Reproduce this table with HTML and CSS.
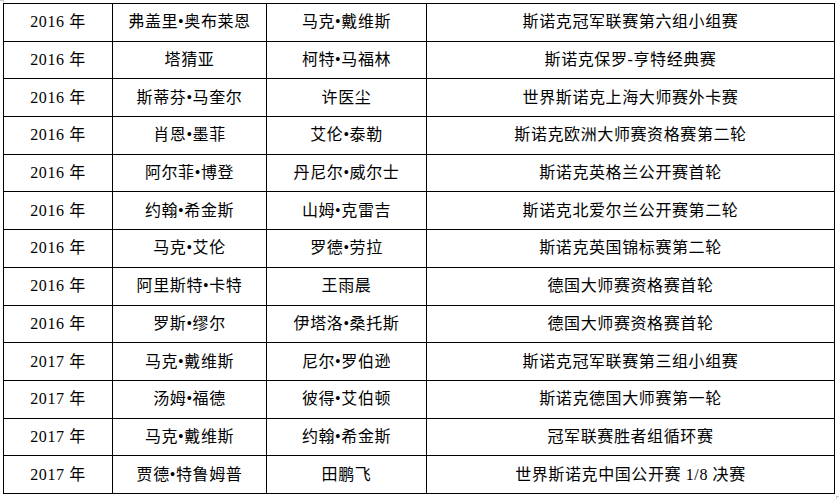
FILE: index.html
```html
<!DOCTYPE html>
<html lang="zh-CN">
<head>
<meta charset="utf-8">
<title>比赛记录</title>
<link rel="stylesheet" href="styles.css">
</head>
<body>
<span class="mark mark-tl"></span>
<table class="records">
  <colgroup>
    <col class="c-year">
    <col class="c-p1">
    <col class="c-p2">
    <col class="c-event">
  </colgroup>
  <tbody>
    <tr><td>2016 年</td><td>弗盖里•奥布莱恩</td><td>马克•戴维斯</td><td>斯诺克冠军联赛第六组小组赛</td></tr>
    <tr><td>2016 年</td><td>塔猜亚</td><td>柯特•马福林</td><td>斯诺克保罗-亨特经典赛</td></tr>
    <tr><td>2016 年</td><td>斯蒂芬•马奎尔</td><td>许医尘</td><td>世界斯诺克上海大师赛外卡赛</td></tr>
    <tr><td>2016 年</td><td>肖恩•墨菲</td><td>艾伦•泰勒</td><td>斯诺克欧洲大师赛资格赛第二轮</td></tr>
    <tr><td>2016 年</td><td>阿尔菲•博登</td><td>丹尼尔•威尔士</td><td>斯诺克英格兰公开赛首轮</td></tr>
    <tr><td>2016 年</td><td>约翰•希金斯</td><td>山姆•克雷吉</td><td>斯诺克北爱尔兰公开赛第二轮</td></tr>
    <tr><td>2016 年</td><td>马克•艾伦</td><td>罗德•劳拉</td><td>斯诺克英国锦标赛第二轮</td></tr>
    <tr><td>2016 年</td><td>阿里斯特•卡特</td><td>王雨晨</td><td>德国大师赛资格赛首轮</td></tr>
    <tr><td>2016 年</td><td>罗斯•缪尔</td><td>伊塔洛•桑托斯</td><td>德国大师赛资格赛首轮</td></tr>
    <tr><td>2017 年</td><td>马克•戴维斯</td><td>尼尔•罗伯逊</td><td>斯诺克冠军联赛第三组小组赛</td></tr>
    <tr><td>2017 年</td><td>汤姆•福德</td><td>彼得•艾伯顿</td><td>斯诺克德国大师赛第一轮</td></tr>
    <tr><td>2017 年</td><td>马克•戴维斯</td><td>约翰•希金斯</td><td>冠军联赛胜者组循环赛</td></tr>
    <tr><td>2017 年</td><td>贾德•特鲁姆普</td><td>田鹏飞</td><td>世界斯诺克中国公开赛 1/8 决赛</td></tr>
  </tbody>
</table>
<span class="mark mark-br"></span>
</body>
</html>
```
FILE: styles.css
```css
html, body {
  margin: 0;
  padding: 0;
  background: #fff;
}

body {
  padding: 3px 0 0 3px;
  font-family: "Liberation Serif", "Noto Sans CJK SC", serif;
  font-size: 16px;
  color: #000;
}

.records {
  border-collapse: collapse;
  table-layout: fixed;
  width: 831px;
}

.c-year { width: 109px; }
.c-p1 { width: 154px; }
.c-p2 { width: 160px; }
.c-event { width: 408px; }

.records td {
  border: 1px solid #000;
  height: 36.7px;
  padding: 0;
  text-align: center;
  vertical-align: middle;
  line-height: 20px;
  letter-spacing: 0.6px;
  white-space: nowrap;
}

.mark {
  position: absolute;
  width: 3px;
  height: 2px;
  border-top: 1px solid #c8c8c8;
}

.mark-tl {
  left: 0;
  top: 0;
  border-right: 1px solid #c8c8c8;
  height: 1px;
}

.mark-br {
  left: 836px;
  top: 496px;
  border-left: 1px solid #c8c8c8;
}
```
